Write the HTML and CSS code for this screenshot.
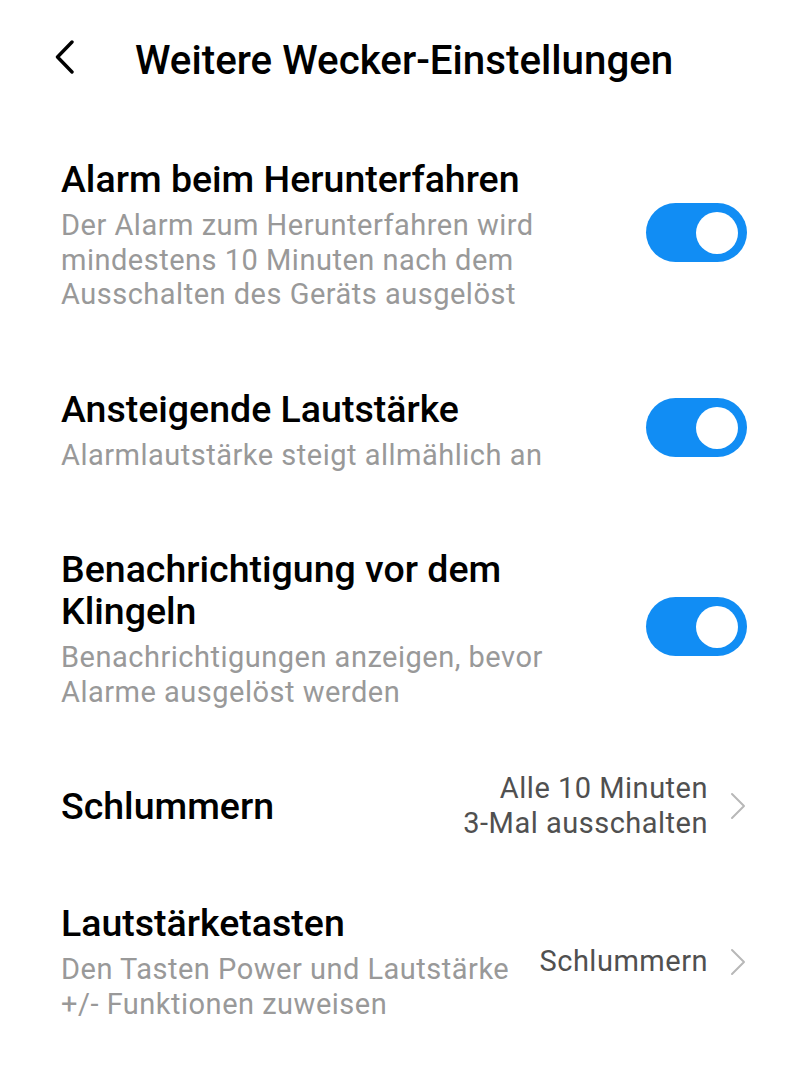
FILE: index.html
```html
<!DOCTYPE html>
<html lang="de">
<head>
    <meta charset="UTF-8">
    <meta name="viewport" content="width=device-width, initial-scale=1.0">
    <title>Weitere Wecker-Einstellungen</title>
    <link rel="stylesheet" href="styles.css">
</head>
<body>
    <header class="topbar">
        <button class="back" aria-label="Zurück">
            <svg width="22" height="34" viewBox="0 0 22 34">
                <path d="M18 2 L3.5 17 L18 32" fill="none" stroke="#000" stroke-width="3.4" stroke-linecap="round" stroke-linejoin="round"/>
            </svg>
        </button>
        <h1>Weitere Wecker-Einstellungen</h1>
    </header>

    <main class="list">
        <div class="item">
            <div class="text">
                <div class="title">Alarm beim Herunterfahren</div>
                <div class="desc">Der Alarm zum Herunterfahren wird mindestens 10 Minuten nach dem Ausschalten des Geräts ausgelöst</div>
            </div>
            <label class="switch">
                <input type="checkbox" checked>
                <span class="track"></span>
            </label>
        </div>

        <div class="item">
            <div class="text">
                <div class="title">Ansteigende Lautstärke</div>
                <div class="desc">Alarmlautstärke steigt allmählich an</div>
            </div>
            <label class="switch">
                <input type="checkbox" checked>
                <span class="track"></span>
            </label>
        </div>

        <div class="item">
            <div class="text">
                <div class="title">Benachrichtigung vor dem Klingeln</div>
                <div class="desc">Benachrichtigungen anzeigen, bevor Alarme ausgelöst werden</div>
            </div>
            <label class="switch">
                <input type="checkbox" checked>
                <span class="track"></span>
            </label>
        </div>

        <div class="item item-compact">
            <div class="text">
                <div class="title">Schlummern</div>
            </div>
            <div class="value">
                <span>Alle 10 Minuten<br>3-Mal ausschalten</span>
                <svg class="arrow" width="16" height="28" viewBox="0 0 16 28">
                    <path d="M2 2 L14 14 L2 26" fill="none" stroke="#b8b8b8" stroke-width="2" stroke-linecap="round" stroke-linejoin="round"/>
                </svg>
            </div>
        </div>

        <div class="item">
            <div class="text">
                <div class="title">Lautstärketasten</div>
                <div class="desc">Den Tasten Power und Lautstärke +/- Funktionen zuweisen</div>
            </div>
            <div class="value">
                <span>Schlummern</span>
                <svg class="arrow" width="16" height="28" viewBox="0 0 16 28">
                    <path d="M2 2 L14 14 L2 26" fill="none" stroke="#b8b8b8" stroke-width="2" stroke-linecap="round" stroke-linejoin="round"/>
                </svg>
            </div>
        </div>
    </main>
</body>
</html>
```

FILE: styles.css
```css
body {
    margin: 0;
    background: #fff;
    font-family: Roboto, "Noto Sans", sans-serif;
    color: #000;
}

.topbar {
    height: 120px;
    display: flex;
    align-items: center;
    padding-left: 54px;
    box-sizing: border-box;
}

.back {
    background: none;
    border: none;
    padding: 0;
    width: 22px;
    height: 34px;
    margin-top: -6px;
    cursor: pointer;
}

.topbar h1 {
    margin: 0 0 0 59px;
    font-size: 40.3px;
    font-weight: 500;
}

.list {
    padding: 0 60px 0 61px;
}

.item {
    display: flex;
    align-items: center;
    padding: 38px 0;
}

.item-compact {
    padding: 24px 0;
}

.text {
    flex: 1;
    margin-right: 24px;
}

.title {
    font-size: 37.5px;
    font-weight: 500;
    line-height: 42px;
}

.desc {
    margin-top: 8px;
    font-size: 29px;
    line-height: 34.5px;
    letter-spacing: 0.5px;
    color: #999;
}

.switch {
    position: relative;
    flex: none;
    width: 101px;
    height: 59px;
    margin-top: -4px;
}

.switch input {
    display: none;
}

.track {
    display: block;
    width: 100%;
    height: 100%;
    border-radius: 30px;
    background: #ccc;
}

.track::after {
    content: "";
    position: absolute;
    top: 8.5px;
    left: 9px;
    width: 42px;
    height: 42px;
    border-radius: 50%;
    background: #fff;
}

.switch input:checked + .track {
    background: #118df4;
}

.switch input:checked + .track::after {
    left: 50px;
}

.value {
    flex: none;
    display: flex;
    align-items: center;
    gap: 22px;
    text-align: right;
    font-size: 29px;
    line-height: 34.5px;
    letter-spacing: 0.5px;
    color: #505050;
}

.arrow {
    margin-right: 1px;
}
```
